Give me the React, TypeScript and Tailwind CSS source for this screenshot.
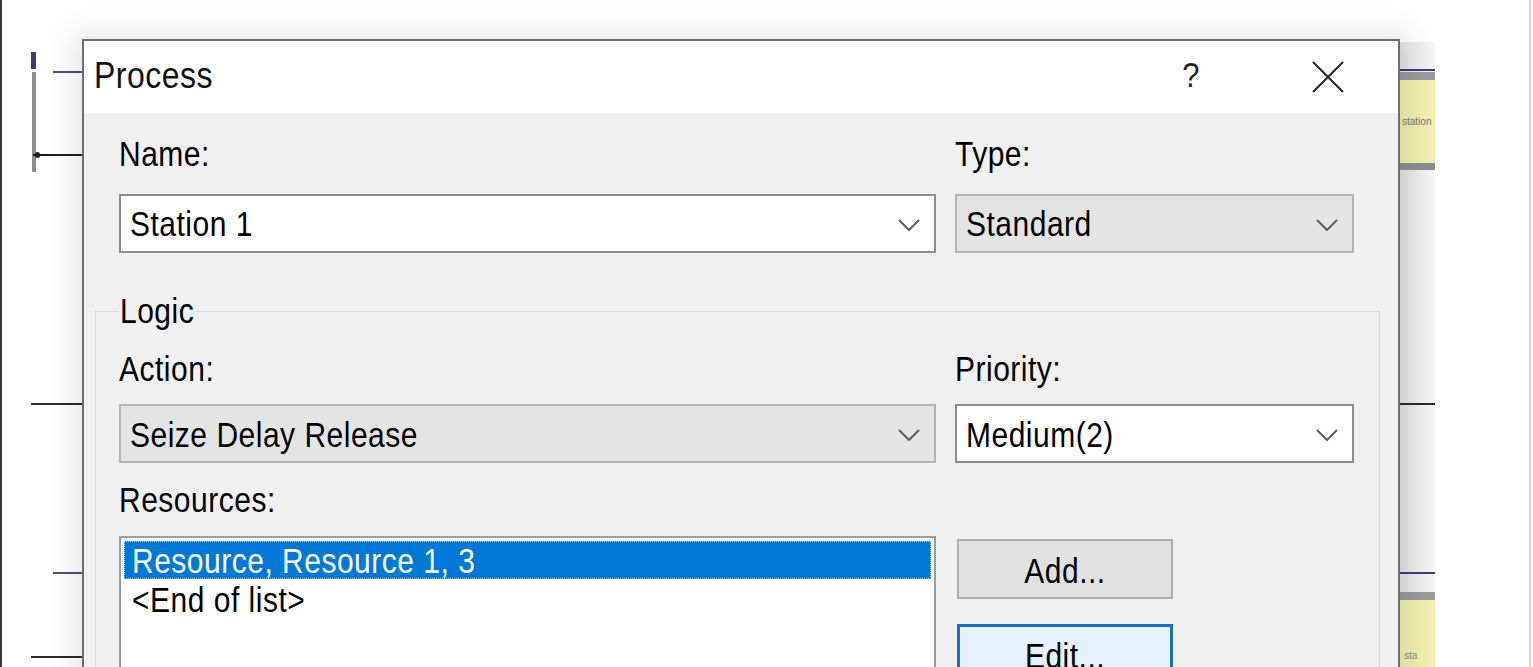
import React from "react";

const T = ({ children, className = "" }: { children: React.ReactNode; className?: string }) => (
  <span className={"inline-block origin-center scale-y-[1.15] tracking-[0.5px] " + className}>{children}</span>
);

const Chevron = () => (
  <svg width="22" height="12" viewBox="0 0 22 12" className="shrink-0">
    <path d="M1 1 L11 11 L21 1" fill="none" stroke="#5c5c5c" strokeWidth="2" />
  </svg>
);

const Combo = ({ value, gray }: { value: string; gray?: boolean }) => (
  <div
    className={
      "flex h-[59px] items-center border-2 pl-[9px] pr-[14px] " +
      (gray ? "bg-[#e4e4e4] border-[#b4b4b4]" : "bg-white border-[#8c8c8c]")
    }
  >
    <div className="flex-1 pt-[2px] text-[30px] leading-[34px] text-black">
      <T>{value}</T>
    </div>
    <div className="pt-[2px]">
      <Chevron />
    </div>
  </div>
);

const Label = ({ children }: { children: React.ReactNode }) => (
  <div className="h-[34px] text-[30px] leading-[34px] text-black">
    <T>{children}</T>
  </div>
);

export default function App() {
  return (
    <div className="relative h-[667px] w-[1533px] overflow-hidden bg-white font-['Liberation_Sans',Arial,sans-serif]">
      {/* outer frame lines */}
      <div className="absolute left-0 top-0 h-full w-[2px] bg-[#3a3a3a]" />
      <div className="absolute right-[2px] top-0 h-full w-[2px] bg-[#d6d6d6]" />

      {/* left canvas drawing */}
      <div className="absolute left-[31px] top-[52px] h-[17px] w-[5px] bg-[#3c3c78]" />
      <div className="absolute left-[32px] top-[72px] h-[100px] w-[4px] bg-[#8c8c8c]" />
      <div className="absolute left-[53px] top-[71px] h-[2px] w-[30px] bg-[#4b4b8a]" />
      <div className="absolute left-[33px] top-[154px] h-[2px] w-[50px] bg-[#1e1e1e]" />
      <div className="absolute left-[35px] top-[152px] h-[6px] w-[5px] rounded-full bg-[#1e1e1e]" />
      <div className="absolute left-[31px] top-[403px] h-[2px] w-[52px] bg-[#2a2a2a]" />
      <div className="absolute left-[53px] top-[572px] h-[2px] w-[30px] bg-[#50506e]" />
      <div className="absolute left-[31px] top-[656px] h-[2px] w-[52px] bg-[#2a2a2a]" />

      {/* right canvas drawing */}
      <div className="absolute left-[1400px] top-[42px] h-[625px] w-[35px] bg-gradient-to-r from-[#e2e2e2] to-[#f6f6f6]" />
      <div className="absolute left-[1400px] top-[69px] h-[2px] w-[35px] bg-[#3c3c78]" />
      <div className="absolute left-[1400px] top-[72px] h-[8px] w-[35px] bg-[#9a9a9a]" />
      <div className="absolute left-[1400px] top-[80px] flex h-[83px] w-[35px] items-center overflow-hidden bg-[#f1eeb0] pl-[2px]">
        <span className="text-[10px] leading-none text-[#777]">station</span>
      </div>
      <div className="absolute left-[1400px] top-[163px] h-[7px] w-[35px] bg-[#8e8e8e]" />
      <div className="absolute left-[1400px] top-[403px] h-[2px] w-[35px] bg-[#2a2a2a]" />
      <div className="absolute left-[1400px] top-[572px] h-[2px] w-[35px] bg-[#3c3c78]" />
      <div className="absolute left-[1400px] top-[592px] h-[8px] w-[35px] bg-[#9a9a9a]" />
      <div className="absolute left-[1400px] top-[600px] flex h-[67px] w-[35px] items-end overflow-hidden bg-[#f1eeb0] pb-[6px] pl-[4px]">
        <span className="text-[10px] leading-none text-[#888]">sta</span>
      </div>

      {/* dialog window */}
      <div className="absolute left-[82px] top-[39px] h-[720px] w-[1318px] border-2 border-[#6e6e6e] bg-[#f0f0f0] shadow-[0_0_28px_8px_rgba(0,0,0,0.10)]">
        {/* title bar */}
        <div className="flex h-[72px] items-center bg-white pb-[4px] pl-[10px] pr-[40px]">
          <div className="text-[32px] leading-[36px] text-[#111]">
            <T>Process</T>
          </div>
          <div className="ml-auto flex w-[60px] justify-center text-[31px] leading-[36px] text-[#222]">
            <T>?</T>
          </div>
          <div className="ml-[77px] flex w-[60px] justify-center pt-[4px]">
            <svg width="32" height="32" viewBox="0 0 32 32">
              <path d="M1 1 L31 31 M31 1 L1 31" stroke="#222" strokeWidth="2" fill="none" />
            </svg>
          </div>
        </div>

        {/* body */}
        <div className="pl-[11px] pr-[20px] pt-[25px]">
          <div className="mx-[24px] grid grid-cols-[817px_399px] gap-x-[19px]">
            <div>
              <Label>Name:</Label>
              <div className="mt-[22px]">
                <Combo value="Station 1" />
              </div>
            </div>
            <div>
              <Label>Type:</Label>
              <div className="mt-[22px]">
                <Combo value="Standard" gray />
              </div>
            </div>
          </div>

          <fieldset className="mt-[41px] border border-[#d9d9d9] px-[23px] pt-[24px] pb-[40px]">
            <legend className="ml-0 px-[1px] text-[30px] leading-[34px] text-black">
              <T>Logic</T>
            </legend>
            <div className="grid grid-cols-[817px_399px] gap-x-[19px]">
              <div>
                <Label>Action:</Label>
                <div className="mt-[18px]">
                  <Combo value="Seize Delay Release" gray />
                </div>
              </div>
              <div>
                <Label>Priority:</Label>
                <div className="mt-[18px]">
                  <Combo value="Medium(2)" />
                </div>
              </div>
            </div>
            <div className="mt-[20px]">
              <Label>Resources:</Label>
            </div>
            <div className="mt-[19px] grid grid-cols-[817px_399px] gap-x-[21px]">
              <div className="h-[200px] border-2 border-[#9a9a9a] bg-white p-[3px]">
                <div className="flex h-[38px] items-center bg-[#0078d7] pl-[8px] pt-[2px] text-[30px] leading-[34px] text-white outline-1 outline-dotted outline-[#9ccaf0] -outline-offset-1">
                  <T>Resource, Resource 1, 3</T>
                </div>
                <div className="flex h-[38px] items-center pl-[8px] pt-[3px] text-[30px] leading-[34px] text-black">
                  <T>&lt;End of list&gt;</T>
                </div>
              </div>
              <div className="flex flex-col pt-[3px]">
                <div className="flex h-[60px] w-[216px] items-center justify-center border-2 border-[#adadad] bg-[#e1e1e1] pt-[4px] text-[30px] leading-[34px] text-black">
                  <T>Add...</T>
                </div>
                <div className="mt-[25px] flex h-[60px] w-[216px] items-center justify-center border-[3px] border-[#1a6fb8] bg-[#e5f1fb] pt-[4px] text-[30px] leading-[34px] text-black">
                  <T>Edit...</T>
                </div>
              </div>
            </div>
          </fieldset>
        </div>
      </div>
    </div>
  );
}
